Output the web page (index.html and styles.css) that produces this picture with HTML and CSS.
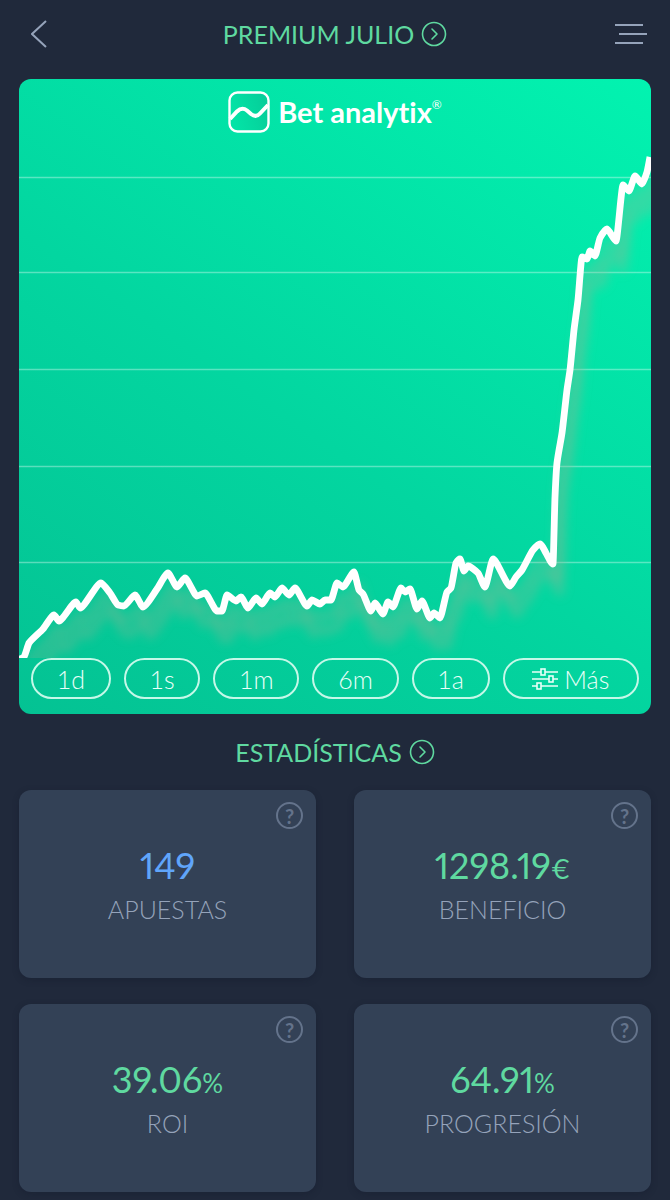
FILE: index.html
```html
<!DOCTYPE html>
<html lang="es">
<head>
  <meta charset="UTF-8">
  <meta name="viewport" content="width=device-width, initial-scale=1.0">
  <title>Bet analytix - Premium Julio</title>
  <link rel="stylesheet" href="styles.css">
</head>
<body>
  <header class="topbar">
    <button class="icon-btn back-btn" aria-label="Volver">
      <svg width="16" height="28" viewBox="0 0 16 28"><path d="M15 1 L1 14 L15 27"/></svg>
    </button>
    <h1 class="title">
      <a href="#">PREMIUM JULIO
        <svg class="arrow" width="26" height="26" viewBox="0 0 26 26"><circle cx="13" cy="13" r="11.5"/><path d="M11 8 L16 13 L11 18"/></svg>
      </a>
    </h1>
    <button class="icon-btn menu-btn" aria-label="Menú">
      <svg width="32" height="22" viewBox="0 0 32 22"><path d="M0 2 H28 M4 11 H32 M0 20 H28"/></svg>
    </button>
  </header>

  <main>
    <section class="chart-card">
      <div class="brand">
        <svg width="42" height="42" viewBox="0 0 42 42">
          <defs>
            <linearGradient id="logoFill" x1="0" y1="0.3" x2="1" y2="0">
              <stop offset="0" stop-color="#03e3a6"/>
              <stop offset="1" stop-color="#06cb98"/>
            </linearGradient>
          </defs>
          <rect x="1.5" y="1.5" width="39" height="39" rx="8" fill="url(#logoFill)" stroke="#fff" stroke-width="2.4"/>
          <path d="M2 28 L9 20.5 Q14 15.5 19 19.5 L23 23 Q28 27 32 22.5 L40 14" fill="none" stroke="#fff" stroke-width="4"/>
        </svg>
        <span class="brand-name">Bet analytix<sup>®</sup></span>
      </div>

      <svg class="chart" viewBox="0 0 632 579" role="img" aria-label="Evolución del beneficio">
        <defs>
          <filter id="blur" x="-10%" y="-10%" width="120%" height="120%">
            <feGaussianBlur stdDeviation="5"/>
          </filter>
          <path id="curve"/>
        </defs>
        <path class="grid-line" d="M0 98.5 H632 M0 193.5 H632 M0 290.5 H632 M0 387.5 H632 M0 483.5 H632"/>
        <g filter="url(#blur)">
          <use href="#curve" class="shadow" x="4" y="14"/>
          <use href="#curve" class="shadow" x="7" y="28"/>
        </g>
        <use href="#curve" class="curve"/>
      </svg>

      <div class="periods">
        <button>1d</button>
        <button>1s</button>
        <button>1m</button>
        <button>6m</button>
        <button>1a</button>
        <button class="more">
          <svg width="26" height="22" viewBox="0 0 26 22"><path d="M0 4 H9 M13 4 H26 M0 11 H17 M21 11 H26 M0 18 H5 M9 18 H26"/><rect x="9" y="1" width="4" height="6"/><rect x="17" y="8" width="4" height="6"/><rect x="5" y="15" width="4" height="6"/></svg>
          Más
        </button>
      </div>
    </section>

    <h2 class="title section-title">
      <a href="#">ESTADÍSTICAS
        <svg class="arrow" width="26" height="26" viewBox="0 0 26 26"><circle cx="13" cy="13" r="11.5"/><path d="M11 8 L16 13 L11 18"/></svg>
      </a>
    </h2>

    <section class="stats">
      <article class="stat">
        <button class="help" aria-label="Ayuda">?</button>
        <p class="value blue">149</p>
        <p class="label">APUESTAS</p>
      </article>
      <article class="stat">
        <button class="help" aria-label="Ayuda">?</button>
        <p class="value">1298.19<small>€</small></p>
        <p class="label">BENEFICIO</p>
      </article>
      <article class="stat">
        <button class="help" aria-label="Ayuda">?</button>
        <p class="value">39.06<small>%</small></p>
        <p class="label">ROI</p>
      </article>
      <article class="stat">
        <button class="help" aria-label="Ayuda">?</button>
        <p class="value">64.91<small>%</small></p>
        <p class="label">PROGRESIÓN</p>
      </article>
    </section>
  </main>

  <script src="chart.js"></script>
</body>
</html>
```
FILE: styles.css
```css
* {
  box-sizing: border-box;
}

body {
  margin: 0;
  padding: 0 19px 8px;
  background-color: #20293b;
  font-family: Lato, "Liberation Sans", sans-serif;
  color: #95a3ba;
}

button {
  font-family: inherit;
  background: none;
  cursor: pointer;
}

.topbar {
  display: grid;
  grid-template-columns: 1fr auto 1fr;
  align-items: center;
  height: 68px;
  margin-bottom: 11px;
}

.icon-btn {
  display: flex;
  border: none;
  padding: 0;
}

.icon-btn svg {
  fill: none;
  stroke: #95a3ba;
  stroke-width: 2;
}

.back-btn {
  justify-self: start;
  padding-left: 12px;
}

.menu-btn {
  justify-self: end;
  padding-right: 4px;
}

.title {
  margin: 0;
  font-size: 25px;
  line-height: 32px;
  font-weight: 400;
}

.title a {
  display: flex;
  justify-content: center;
  align-items: center;
  gap: 7px;
  color: #5fd9a0;
  text-decoration: none;
}

.arrow {
  fill: none;
  stroke: currentColor;
  stroke-width: 1.6;
  stroke-linecap: round;
  stroke-linejoin: round;
}

.chart-card {
  position: relative;
  border-radius: 12px;
  overflow: hidden;
  background: linear-gradient(35deg, #04c293 0%, #03d6a0 45%, #02f3b0 100%);
}

.brand {
  position: absolute;
  top: 12px;
  left: 0;
  right: 0;
  display: flex;
  justify-content: center;
  align-items: center;
  gap: 8px;
  color: #fff;
}

.brand-name {
  font-size: 29px;
  line-height: 40px;
  font-weight: 700;
  font-variant-ligatures: none;
}

.brand-name sup {
  font-size: 12px;
  line-height: 12px;
  font-weight: 400;
  vertical-align: 14px;
}

.chart {
  display: block;
  width: 100%;
  height: auto;
}

.grid-line {
  stroke: #fff;
  stroke-opacity: 0.35;
  stroke-width: 1.5;
}

.curve,
.shadow {
  fill: none;
  stroke-linejoin: round;
}

.curve {
  stroke: #fff;
  stroke-width: 6.8;
}

.shadow {
  stroke: #a0b094;
  stroke-opacity: 0.28;
  stroke-width: 9;
}

.periods {
  display: flex;
  gap: 13px;
  padding: 0 12px 15px;
}

.periods button {
  flex: 1 1 auto;
  height: 41px;
  padding: 0 20px;
  border: 2px solid #c5f8e8;
  border-radius: 21px;
  color: #e8fff8;
  font-size: 25px;
  line-height: 32px;
  font-weight: 300;
}

.periods .more {
  display: flex;
  justify-content: center;
  align-items: center;
  gap: 6px;
  padding: 0 24px;
}

.more svg {
  fill: none;
  stroke: currentColor;
  stroke-width: 1.6;
}

.section-title {
  padding: 22px 0;
}

.stats {
  display: grid;
  grid-template-columns: 1fr 1fr;
  gap: 26px 38px;
}

.stat {
  position: relative;
  padding: 53px 12px;
  border-radius: 12px;
  background-color: #334156;
  box-shadow: 0 2px 6px rgba(20, 28, 45, 0.4);
  text-align: center;
}

.stat p {
  margin: 0;
}

.help {
  position: absolute;
  top: 12px;
  right: 13px;
  width: 27px;
  height: 27px;
  padding: 0;
  border: 2px solid #64738b;
  border-radius: 50%;
  color: #64738b;
  font-size: 20px;
  line-height: 22px;
  font-weight: 700;
}

.value {
  color: #5fd9a0;
  font-size: 36px;
  line-height: 44px;
  font-variant-numeric: proportional-nums;
}

.value small {
  font-size: 26px;
  line-height: 26px;
}

.value.blue {
  color: #60a5fa;
}

.label {
  padding-top: 6px;
  font-size: 25px;
  line-height: 32px;
  font-weight: 300;
}
```
FILE: chart.js
```js
// bankroll history, x / y in chart units
const points = [
  [-1, 581], [5, 578], [10, 564], [24, 550], [35, 536], [40, 542], [57, 523], [61, 529],
  [82, 504], [91, 514], [99, 526], [105, 527], [116, 516], [124, 528], [138, 510], [149, 494],
  [158, 508], [166, 499], [178, 517], [186, 514], [198, 532], [203, 532], [208, 516], [217, 522],
  [222, 518], [229, 529], [237, 519], [243, 525], [251, 514], [256, 518], [263, 509], [270, 516],
  [276, 509], [288, 527], [293, 521], [301, 525], [306, 521], [312, 521], [318, 504], [324, 508],
  [335, 493], [340, 511], [344, 515], [352, 532], [356, 524], [364, 535], [369, 523], [374, 528],
  [382, 509], [386, 513], [391, 510], [398, 530], [403, 522], [411, 539], [415, 534], [421, 539],
  [428, 513], [432, 509], [437, 484], [441, 480], [445, 492], [449, 487], [459, 494], [466, 508],
  [474, 480], [491, 507], [497, 498], [503, 491], [514, 471], [521, 465], [534, 485], [536, 418],
  [538, 384], [543, 354], [548, 311], [551, 291], [555, 251], [559, 221], [563, 178], [568, 180],
  [571, 172], [576, 177], [581, 159], [588, 150], [597, 162], [604, 106], [610, 112], [616, 97],
  [623, 105], [628, 93], [631, 78]
];

// tangent at each point, flat on peaks and valleys
function tangent(i) {
  if (i === 0 || i === points.length - 1) return null;
  const [x0, y0] = points[i - 1];
  const [x1, y1] = points[i];
  const [x2, y2] = points[i + 1];
  const a = (y1 - y0) / (x1 - x0);
  const b = (y2 - y1) / (x2 - x1);
  return a * b <= 0 ? 0 : 2 * a * b / (a + b);
}

let d = `M${points[0].join(' ')}`;
for (let i = 1; i < points.length; i++) {
  const [x0, y0] = points[i - 1];
  const [x1, y1] = points[i];
  const slope = (y1 - y0) / (x1 - x0);
  const m0 = tangent(i - 1) ?? slope;
  const m1 = tangent(i) ?? slope;
  // short handles keep the corners tight
  const h = (x1 - x0) / 5;
  d += ` C${x0 + h} ${y0 + m0 * h} ${x1 - h} ${y1 - m1 * h} ${x1} ${y1}`;
}

document.getElementById('curve').setAttribute('d', d);
```
